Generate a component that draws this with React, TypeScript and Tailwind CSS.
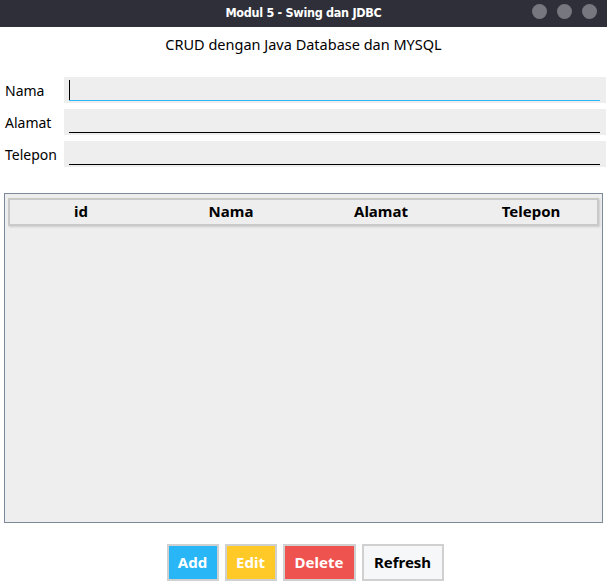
import React from "react";

const font = { fontFamily: '"Noto Sans", "Open Sans", sans-serif' };

function Field({ label, active }: { label: string; active?: boolean }) {
  return (
    <div className="flex items-center h-[26px]">
      <div className="w-[64px] pl-[5px] pt-[2px] text-[14px] text-black leading-none">{label}</div>
      <div className="relative flex-1 h-full bg-[#eeeeee] mr-[1px]">
        {active && <div className="absolute left-[5px] top-[3px] w-[1px] h-[20px] bg-black" />}
        <div
          className={
            "absolute left-[5px] right-[6px] bottom-[2px] h-[1px] " +
            (active ? "bg-[#29b6f6]" : "bg-black")
          }
        />
      </div>
    </div>
  );
}

export default function App() {
  return (
    <div className="w-[607px] h-[586px] bg-white flex flex-col" style={font}>
      <div className="relative h-[27px] bg-[#2e2f38] flex items-center justify-center">
        <span
          className="text-white font-bold text-[12.5px] tracking-[-0.3px]"
          style={{ fontFamily: '"DejaVu Sans Condensed", "Noto Sans", sans-serif' }}
        >
          Modul 5 - Swing dan JDBC
        </span>
        <div className="absolute right-[10px] top-[4px] flex gap-[10px]">
          <div className="w-[15px] h-[15px] rounded-full bg-[#77777f]" />
          <div className="w-[15px] h-[15px] rounded-full bg-[#77777f]" />
          <div className="w-[15px] h-[15px] rounded-full bg-[#77777f]" />
        </div>
      </div>

      <div className="h-[36px] flex items-center justify-center text-[14.5px] text-black pb-[1px]">
        CRUD dengan Java Database dan MYSQL
      </div>

      <div className="flex flex-col gap-[6px] mt-[14px]">
        <Field label="Nama" active />
        <Field label="Alamat" />
        <Field label="Telepon" />
      </div>

      <div className="mx-[4px] mt-[26px] h-[330px] border-[1.5px] border-[#7b8a9b] bg-[#eeeeee] pt-[4px] px-[3px]">
        <div className="h-[28px] border-2 border-[#c9c9c9] bg-[#eeeeee] text-[15px] font-bold text-black shadow-[1px_1px_2px_rgba(0,0,0,0.15)] overflow-hidden">
          <div className="ml-[-4px] w-[600px] h-full pb-[2px] grid grid-cols-4 items-center">
            <div className="text-center">id</div>
            <div className="text-center">Nama</div>
            <div className="text-center">Alamat</div>
            <div className="text-center">Telepon</div>
          </div>
        </div>
      </div>

      <div className="flex justify-center gap-[6px] mt-[21px] ml-[3px]">
        <button className="h-[37px] w-[52px] border-2 border-[#d0d0d0] bg-[#29b6f6] text-white font-bold text-[15px]">
          Add
        </button>
        <button className="h-[37px] w-[52px] border-2 border-[#d0d0d0] bg-[#ffca28] text-white font-bold text-[15px]">
          Edit
        </button>
        <button className="h-[37px] w-[73px] border-2 border-[#d0d0d0] bg-[#ef5350] text-white font-bold text-[15px]">
          Delete
        </button>
        <button className="h-[37px] w-[82px] border-2 border-[#d0d0d0] bg-[#f6f7f9] text-black font-bold text-[15px]">
          Refresh
        </button>
      </div>
    </div>
  );
}
